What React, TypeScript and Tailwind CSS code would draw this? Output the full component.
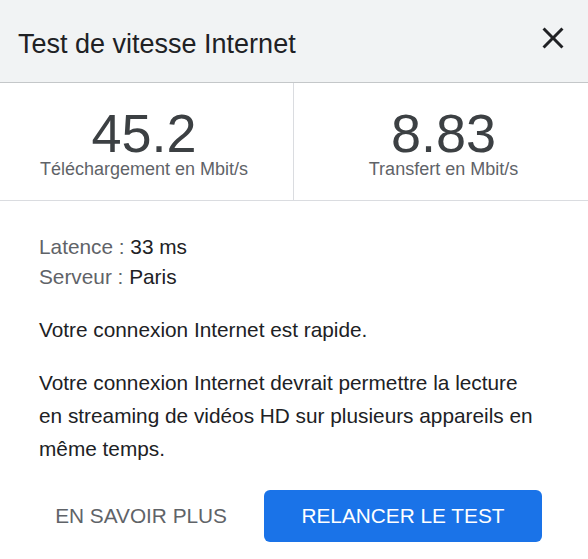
import React from "react";

export default function App() {
  return (
    <div
      className="w-[588px] h-[559px] bg-white flex flex-col overflow-hidden"
      style={{ fontFamily: '"Liberation Sans", Arial, sans-serif' }}
    >
      <div className="h-[83px] shrink-0 bg-[#f1f3f4] border-b border-[#c4c7c9] flex items-center justify-between pl-[18px] pr-[17px]">
        <div className="pt-[6px] text-[27px] text-[#202124] leading-[30px]">Test de vitesse Internet</div>
        <svg width="36" height="36" viewBox="0 0 24 24" className="mb-[6px]">
          <path
            fill="#202124"
            d="M19 6.41L17.59 5 12 10.59 6.41 5 5 6.41 10.59 12 5 17.59 6.41 19 12 13.41 17.59 19 19 17.59 13.41 12z"
          />
        </svg>
      </div>

      <div className="h-[118px] shrink-0 grid grid-cols-[293px_1px_1fr] border-b border-[#dadce0]">
        <div className="flex flex-col items-center pt-[25px] pr-[5px]">
          <div className="text-[54px] leading-[50px] text-[#3c4043]">45.2</div>
          <div className="mt-[1px] text-[18px] leading-[20px] text-[#5f6368]">Téléchargement en Mbit/s</div>
        </div>
        <div className="bg-[#dadce0]" />
        <div className="flex flex-col items-center pt-[25px] pl-[5px]">
          <div className="text-[54px] leading-[50px] text-[#3c4043]">8.83</div>
          <div className="mt-[1px] text-[18px] leading-[20px] text-[#5f6368]">Transfert en Mbit/s</div>
        </div>
      </div>

      <div className="pl-[39px] pr-[46px] pt-[31px] text-[20.8px] text-[#202124]">
        <div className="leading-[30px]">
          <span className="text-[#5f6368]">Latence : </span>33 ms
        </div>
        <div className="leading-[30px]">
          <span className="text-[#5f6368]">Serveur : </span>Paris
        </div>
        <p className="mt-[21px] leading-[33px]">Votre connexion Internet est rapide.</p>
        <p className="mt-[20px] leading-[33px]">
          Votre connexion Internet devrait permettre la lecture en streaming de vidéos HD sur plusieurs appareils en même temps.
        </p>
      </div>

      <div className="mt-[25px] flex items-center justify-end pr-[46px] gap-[21px]">
        <button className="h-[52px] px-[16px] text-[20.8px] text-[#5f6368] bg-transparent">EN SAVOIR PLUS</button>
        <button className="h-[52px] w-[278px] rounded-[6px] bg-[#1a73e8] text-white text-[20.8px]">
          RELANCER LE TEST
        </button>
      </div>
    </div>
  );
}
